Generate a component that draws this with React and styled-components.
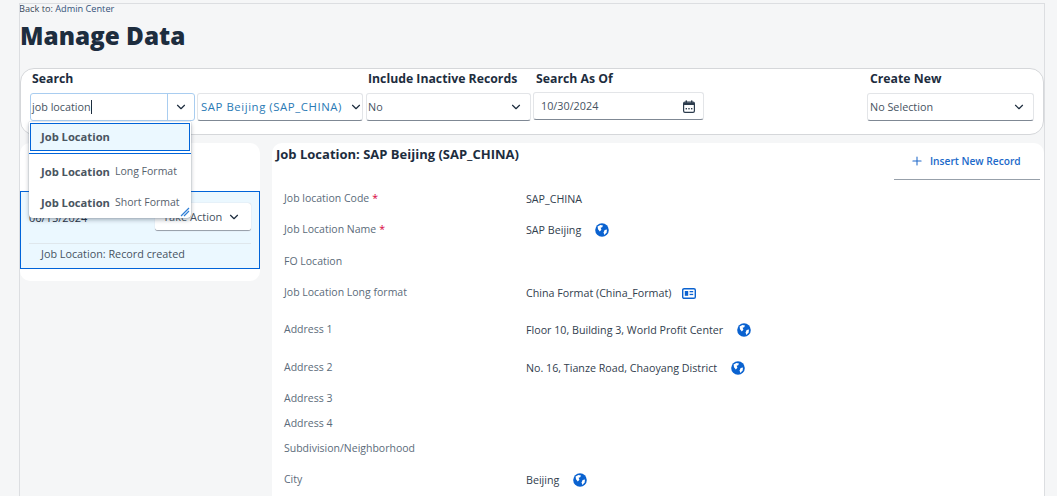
import React from 'react'
import styled, { createGlobalStyle } from 'styled-components'
import { ChevronDown, Plus } from 'lucide-react'

const GlobalStyle = createGlobalStyle`
  html, body {
    margin: 0;
    height: 100%;
    overflow: hidden;
    background: #f5f6f7;
    font-family: "Open Sans", "Liberation Sans", sans-serif;
    color: #1d2d3e;
  }
`

const Page = styled.div`
  box-sizing: border-box;
  height: 493px;
  width: 1026px;
  margin: 3px 0 0 19px;
  border: 1px solid #dcdee1;
  border-bottom: none;
  overflow: hidden;
`

const BackRow = styled.div`
  font-size: 9.2px;
  line-height: 10px;
  height: 11px;
  margin-left: -1px;
  color: #3b4a5a;
`

const BackLink = styled.a`
  color: #33527a;
`

const Title = styled.h1`
  margin: 4px 0 0 0;
  font-size: 24.3px;
  line-height: 34px;
  font-weight: 800;
  color: #1d2d3e;
`

const SearchPanel = styled.section`
  box-sizing: border-box;
  position: relative;
  height: 67px;
  width: 1024px;
  margin-top: 15px;
  padding: 0 9px 0 9px;
  background: #fff;
  border: 1px solid #d5d7da;
  border-radius: 14px;
  display: flex;
`

const Field = styled.div`
  width: ${props => props.$width}px;
  margin-right: ${props => props.$gap || 0}px;
  flex: none;
`

const FieldLabel = styled.div`
  font-size: 12.25px;
  font-weight: 700;
  line-height: 18px;
  height: 24px;
  padding-top: 1px;
  box-sizing: border-box;
  padding-left: ${props => props.$indent || 0}px;
  color: #1d2d3e;
  white-space: nowrap;
`

const Control = styled.div`
  box-sizing: border-box;
  height: 28px;
  margin-top: ${props => props.$lift ? -1 : 0}px;
  display: flex;
  align-items: center;
  background: #fff;
  border: 1px solid ${props => props.$focus ? '#a9cdf0' : '#e3e5e8'};
  border-bottom: 1px solid ${props => props.$focus ? '#a9cdf0' : '#7f8894'};
  border-radius: 3px;
  font-size: ${props => props.$link ? 11.4 : 10.8}px;
  letter-spacing: ${props => props.$link ? 0.55 : 0}px;
  color: ${props => props.$link ? '#2a7ab5' : '#46535f'};
  white-space: nowrap;
`

const ControlText = styled.span`
  flex: 1;
  padding: 0 0 2px ${props => props.$pad ?? 1}px;
`

const Caret = styled.i`
  display: inline-block;
  width: 1px;
  height: 14px;
  background: #1d2d3e;
  vertical-align: -3px;
`

const ArrowCell = styled.div`
  width: ${props => props.$width || 28}px;
  height: 100%;
  display: flex;
  align-items: center;
  justify-content: center;
  flex: none;
  color: #1d2d3e;
  border-left: ${props => props.$split ? '1px solid #a9cdf0' : 'none'};
`

const Popup = styled.div`
  position: absolute;
  left: 8px;
  top: 53px;
  width: 162px;
  height: 96px;
  box-sizing: border-box;
  z-index: 5;
  padding-top: 1px;
  background: #fff;
  border-radius: 0 0 4px 4px;
  box-shadow: 0 0 1px #6a7480, 0 2px 4px rgba(60, 75, 90, 0.4);
  font-size: 10.5px;
`

const Option = styled.div`
  box-sizing: border-box;
  height: ${props => props.$height}px;
  display: flex;
  align-items: center;
  padding-left: 12px;
  gap: 5px;
  color: #56616d;
  white-space: nowrap;
  ${props => props.$active && `
    margin: 0 1px;
    padding: 0 0 2px 10px;
    background: #ebf8ff;
    border: 1px solid #0064d9;
  `}
  ${props => props.$rule && `
    border-top: 1px solid #0064d9;
    margin-top: 2px;
  `}
`

const Strong = styled.b`
  font-size: 11.2px;
  font-weight: 700;
  color: #4a5561;
`

const Grip = styled.svg`
  position: absolute;
  right: 1px;
  bottom: 1px;
`

const Content = styled.div`
  display: flex;
  gap: 12px;
  margin-top: 8px;
`

const HistoryCard = styled.aside`
  width: 240px;
  height: 138px;
  flex: none;
  padding-top: 48px;
  box-sizing: border-box;
  background: #fff;
  border-radius: 10px;
`

const RecordItem = styled.div`
  box-sizing: border-box;
  height: 78px;
  padding: 11px 8px 0 8px;
  background: #ebf8ff;
  border: 1px solid #0064d9;
`

const RecordTop = styled.div`
  display: flex;
  align-items: center;
  justify-content: space-between;
  height: 28px;
  font-size: 11px;
  color: #1d2d3e;
`

const ActionButton = styled.div`
  box-sizing: border-box;
  width: 96px;
  height: 28px;
  display: flex;
  align-items: center;
  justify-content: space-between;
  padding: 0 10px 0 8px;
  background: #fff;
  border-radius: 3px;
  border-bottom: 1px solid #9aa2ac;
  box-shadow: 0 0 1px #b5bbc2;
  font-size: 11px;
  color: #46535f;
`

const RecordNote = styled.div`
  margin-top: 12px;
  padding: 2px 0 0 12px;
  border-top: 1px solid #dfe7ec;
  font-size: 10.8px;
  line-height: 16px;
  color: #46535f;
`

const DetailCard = styled.main`
  flex: 1;
  height: 360px;
  padding: 3px 0 0 4px;
  background: #fff;
  border-radius: 10px 10px 0 0;
`

const DetailHead = styled.div`
  display: flex;
  justify-content: space-between;
  height: 44px;
`

const DetailTitle = styled.h2`
  margin: 0;
  font-size: 13px;
  line-height: 16px;
  font-weight: 700;
  color: #1d2d3e;
`

const InsertButton = styled.div`
  box-sizing: border-box;
  width: 146px;
  height: 32px;
  margin: 2px 4px 0 0;
  padding: 0 0 5px 16px;
  display: flex;
  align-items: center;
  gap: 6px;
  border-bottom: 1px solid #97a0aa;
  font-size: 10.2px;
  font-weight: 600;
  color: #2069c9;
  white-space: nowrap;
`

const Row = styled.div`
  display: flex;
  align-items: flex-start;
  height: ${props => props.$height}px;
  padding-left: 8px;
`

const Label = styled.div`
  width: 242px;
  flex: none;
  font-size: 10.5px;
  line-height: 16px;
  color: #5b6b7a;
`

const Required = styled.span`
  color: #d8003c;
  margin-left: 3px;
`

const Value = styled.div`
  display: flex;
  align-items: center;
  gap: ${props => props.$gap}px;
  margin-top: 1px;
  font-size: 10.7px;
  line-height: 16px;
  color: #32404e;
  white-space: nowrap;
`

function GlobeIcon() {
  return (
    <svg width="14" height="14" viewBox="0 0 14 14">
      <circle cx="7" cy="7" r="6.8" fill="#0a62d0" />
      <path d="M2.6 3.4 5.4 1.9 8 2.4 7.2 4.2 5.6 4.8 6.4 6.8 4.8 8.4 3 6.2Z" fill="#fff" />
      <path d="M9.6 7 12 6.6 11.6 9.6 9.4 12 8.6 9.4Z" fill="#fff" />
    </svg>
  )
}

function CardIcon() {
  return (
    <svg width="14" height="11" viewBox="0 0 14 11">
      <rect x="0.7" y="0.7" width="12.6" height="9.6" rx="1.4" fill="none" stroke="#0a62d0" strokeWidth="1.4" />
      <rect x="2.8" y="3" width="3.4" height="4.8" fill="#0a62d0" />
      <rect x="7.6" y="3" width="3.6" height="1.3" fill="#0a62d0" />
      <rect x="7.6" y="5.8" width="3.6" height="1.3" fill="#0a62d0" />
    </svg>
  )
}

function CalendarIcon() {
  return (
    <svg width="12" height="13" viewBox="0 0 12 13">
      <rect x="0.6" y="2" width="10.8" height="10.4" rx="1.4" fill="none" stroke="#2b3b4c" strokeWidth="1.2" />
      <rect x="1" y="2.4" width="10" height="2.6" fill="#2b3b4c" />
      <rect x="2.6" y="0.4" width="1.4" height="2.4" fill="#2b3b4c" />
      <rect x="8" y="0.4" width="1.4" height="2.4" fill="#2b3b4c" />
      <rect x="2.6" y="8" width="1.4" height="1.4" fill="#2b3b4c" />
      <rect x="5.3" y="8" width="1.4" height="1.4" fill="#2b3b4c" />
      <rect x="8" y="8" width="1.4" height="1.4" fill="#2b3b4c" />
    </svg>
  )
}

const fields = [
  { label: 'Job location Code', value: 'SAP_CHINA', required: true, height: 31 },
  { label: 'Job Location Name', value: 'SAP Beijing', required: true, icon: 'globe', height: 32 },
  { label: 'FO Location', height: 31 },
  { label: 'Job Location Long format', value: 'China Format (China_Format)', icon: 'card', height: 37 },
  { label: 'Address 1', value: 'Floor 10, Building 3, World Profit Center', icon: 'globe', height: 38 },
  { label: 'Address 2', value: 'No. 16, Tianze Road, Chaoyang District', icon: 'globe', height: 31 },
  { label: 'Address 3', height: 25 },
  { label: 'Address 4', height: 25 },
  { label: 'Subdivision/Neighborhood', height: 31 },
  { label: 'City', value: 'Beijing', icon: 'globe', height: 30 },
]

export default function App() {
  return (
    <>
      <GlobalStyle />
      <Page>
        <BackRow>Back to: <BackLink>Admin Center</BackLink></BackRow>
        <Title>Manage Data</Title>

        <SearchPanel>
          <Field $width={165} $gap={2}>
            <FieldLabel $indent={2}>Search</FieldLabel>
            <Control $focus>
              <ControlText>job location<Caret /></ControlText>
              <ArrowCell $split $width={26}><ChevronDown size={14} strokeWidth={2} /></ArrowCell>
            </Control>
          </Field>
          <Field $width={166} $gap={3}>
            <FieldLabel />
            <Control $link>
              <ControlText $pad={3}>SAP Beijing (SAP_CHINA)</ControlText>
              <ArrowCell><ChevronDown size={14} strokeWidth={2} /></ArrowCell>
            </Control>
          </Field>
          <Field $width={165} $gap={2}>
            <FieldLabel $indent={2}>Include Inactive Records</FieldLabel>
            <Control>
              <ControlText>No</ControlText>
              <ArrowCell><ChevronDown size={14} strokeWidth={2} /></ArrowCell>
            </Control>
          </Field>
          <Field $width={171} $gap={163}>
            <FieldLabel $indent={3}>Search As Of</FieldLabel>
            <Control $lift>
              <ControlText $pad={7}>10/30/2024</ControlText>
              <ArrowCell><CalendarIcon /></ArrowCell>
            </Control>
          </Field>
          <Field $width={167}>
            <FieldLabel $indent={3}>Create New</FieldLabel>
            <Control>
              <ControlText $pad={2}>No Selection</ControlText>
              <ArrowCell><ChevronDown size={14} strokeWidth={2} /></ArrowCell>
            </Control>
          </Field>

          <Popup>
            <Option $active $height={28}><Strong>Job Location</Strong></Option>
            <Option $rule $height={35}><Strong>Job Location</Strong> Long Format</Option>
            <Option $height={28}><Strong>Job Location</Strong> Short Format</Option>
            <Grip width="10" height="10" viewBox="0 0 10 10">
              <path d="M1 9 9 1M4 9 9 4" stroke="#2f7fd6" strokeWidth="1.2" fill="none" />
            </Grip>
          </Popup>
        </SearchPanel>

        <Content>
          <HistoryCard>
            <RecordItem>
              <RecordTop>
                <span>06/15/2024</span>
                <ActionButton>Take Action <ChevronDown size={14} strokeWidth={2} color="#1d2d3e" /></ActionButton>
              </RecordTop>
              <RecordNote>Job Location: Record created</RecordNote>
            </RecordItem>
          </HistoryCard>

          <DetailCard>
            <DetailHead>
              <DetailTitle>Job Location: SAP Beijing (SAP_CHINA)</DetailTitle>
              <InsertButton><Plus size={14} strokeWidth={1.8} />Insert New Record</InsertButton>
            </DetailHead>
            {fields.map(field => (
              <Row key={field.label} $height={field.height}>
                <Label>{field.label}{field.required && <Required>*</Required>}</Label>
                {field.value && (
                  <Value $gap={field.icon === 'card' ? 11 : 14}>
                    {field.value}
                    {field.icon === 'globe' && <GlobeIcon />}
                    {field.icon === 'card' && <CardIcon />}
                  </Value>
                )}
              </Row>
            ))}
          </DetailCard>
        </Content>
      </Page>
    </>
  )
}
